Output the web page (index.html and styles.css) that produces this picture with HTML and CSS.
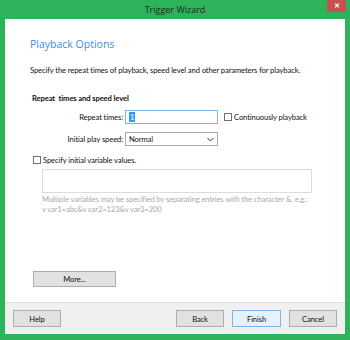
FILE: index.html
```html
<!DOCTYPE html>
<html lang="en">
<head>
    <meta charset="UTF-8">
    <title>Trigger Wizard</title>
    <link rel="stylesheet" href="styles.css">
</head>
<body>
    <div class="window">
        <div class="titlebar">
            <span></span>
            <span class="title">Trigger Wizard</span>
            <button class="close-btn">&#x2715;</button>
        </div>

        <div class="client">
            <div class="content">
                <h1 class="page-title">Playback Options</h1>
                <p class="desc">Specify the repeat times of playback, speed level and other parameters for playback.</p>

                <h2 class="section">Repeat&nbsp; times and speed level</h2>

                <div class="form-row">
                    <label class="field-label">Repeat times:</label>
                    <div class="input-box focused"><span class="sel">1</span></div>
                    <label class="check"><span class="box"></span>Continuously playback</label>
                </div>

                <div class="form-row">
                    <label class="field-label">Initial play speed:</label>
                    <div class="input-box select">
                        <span>Normal</span>
                        <svg width="7" height="5" viewBox="0 0 7 5"><path d="M0.5 1 L3.5 4 L6.5 1" fill="none" stroke="#333" stroke-width="1"/></svg>
                    </div>
                </div>

                <label class="check var-check"><span class="box"></span>Specify initial variable values.</label>
                <div class="var-area"></div>
                <p class="hint">Multiple variables may be specified by separating entries with the character &amp;. e.g.:<br>v var1=abc&amp;v var2=123&amp;v var3=200</p>

                <button class="btn more-btn">More...</button>
            </div>

            <div class="footer">
                <button class="btn">Help</button>
                <div class="spacer"></div>
                <button class="btn">Back</button>
                <button class="btn default">Finish</button>
                <button class="btn">Cancel</button>
            </div>
        </div>
    </div>
</body>
</html>
```

FILE: styles.css
```css
:root {
    --frame: #2db45b;
    --text: #111;
    --blue: #3a8ee6;
    --fs: 7.6px;
}

body {
    margin: 0;
    font-family: 'Lato', 'Open Sans', sans-serif;
    letter-spacing: -0.1px;
    color: var(--text);
}

.window {
    width: 350px;
    height: 340px;
    background: var(--frame);
    display: flex;
    flex-direction: column;
}

.titlebar {
    height: 19px;
    display: grid;
    grid-template-columns: 1fr auto 1fr;
    align-items: start;
}

.title {
    font-family: 'Open Sans', sans-serif;
    font-size: 9px;
    letter-spacing: 0;
    line-height: 19px;
    color: #1b2b20;
}

.close-btn {
    justify-self: end;
    margin-right: 4px;
    width: 19px;
    height: 12px;
    border: none;
    padding: 0;
    background: #c75050;
    color: #fff;
    font-size: 7px;
    font-weight: bold;
    line-height: 12px;
}

.client {
    flex: 1;
    margin: 0 5px 6px;
    background: #fff;
    display: flex;
    flex-direction: column;
}

.content {
    flex: 1;
    padding: 0 0 0 25px;
    display: flex;
    flex-direction: column;
    align-items: flex-start;
}

.page-title {
    margin: 18px 0 0;
    font-family: 'Open Sans', sans-serif;
    font-size: 10.5px;
    font-weight: normal;
    letter-spacing: 0;
    line-height: 14px;
    color: var(--blue);
}

.desc {
    margin: 14px 0 0;
    font-size: var(--fs);
    line-height: 10px;
}

.section {
    margin: 18px 0 0 2px;
    font-size: var(--fs);
    font-weight: bold;
    line-height: 10px;
}

.form-row {
    display: flex;
    align-items: center;
    margin-top: 7px;
    font-size: var(--fs);
}

.form-row + .form-row {
    margin-top: 8px;
}

.field-label {
    width: 93px;
    text-align: right;
    margin-right: 2px;
}

.input-box {
    box-sizing: border-box;
    width: 93px;
    height: 14px;
    border: 1px solid #ababab;
    padding: 0 3px;
    display: flex;
    align-items: center;
}

.input-box.focused {
    border-color: #7eb4ea;
}

.sel {
    background: #3399ff;
    color: #fff;
    padding: 0 1px;
    line-height: 10px;
}

.input-box.select {
    justify-content: space-between;
}

.check {
    display: flex;
    align-items: center;
    font-size: var(--fs);
}

.form-row .check {
    margin-left: 6px;
}

.box {
    box-sizing: border-box;
    width: 8px;
    height: 8px;
    border: 1px solid #707070;
    margin-right: 2px;
    background: #fff;
}

.var-check {
    margin: 9px 0 0 3px;
}

.var-area {
    box-sizing: border-box;
    width: 270px;
    height: 24px;
    margin: 4px 0 0 12px;
    border: 1px solid #dcdcdc;
}

.hint {
    margin: 1px 0 0 12px;
    font-size: var(--fs);
    line-height: 10px;
    color: #a9a9a9;
}

.btn {
    box-sizing: border-box;
    height: 17px;
    width: 48px;
    border: 1px solid #adadad;
    background: #e1e1e1;
    font-family: inherit;
    font-size: var(--fs);
    letter-spacing: inherit;
    color: var(--text);
    padding: 0;
}

.more-btn {
    width: 83px;
    height: 16px;
    margin: 57px 0 0 3px;
}

.btn.default {
    border-color: #7eb4ea;
    background: #e5f1fb;
    width: 49px;
}

.footer {
    height: 32px;
    box-sizing: border-box;
    border-top: 1px solid #dfdfdf;
    background: #f0f0f0;
    display: flex;
    gap: 8px;
    padding: 7px 8px 0;
    align-items: flex-start;
}

.spacer {
    flex: 1;
}
```
